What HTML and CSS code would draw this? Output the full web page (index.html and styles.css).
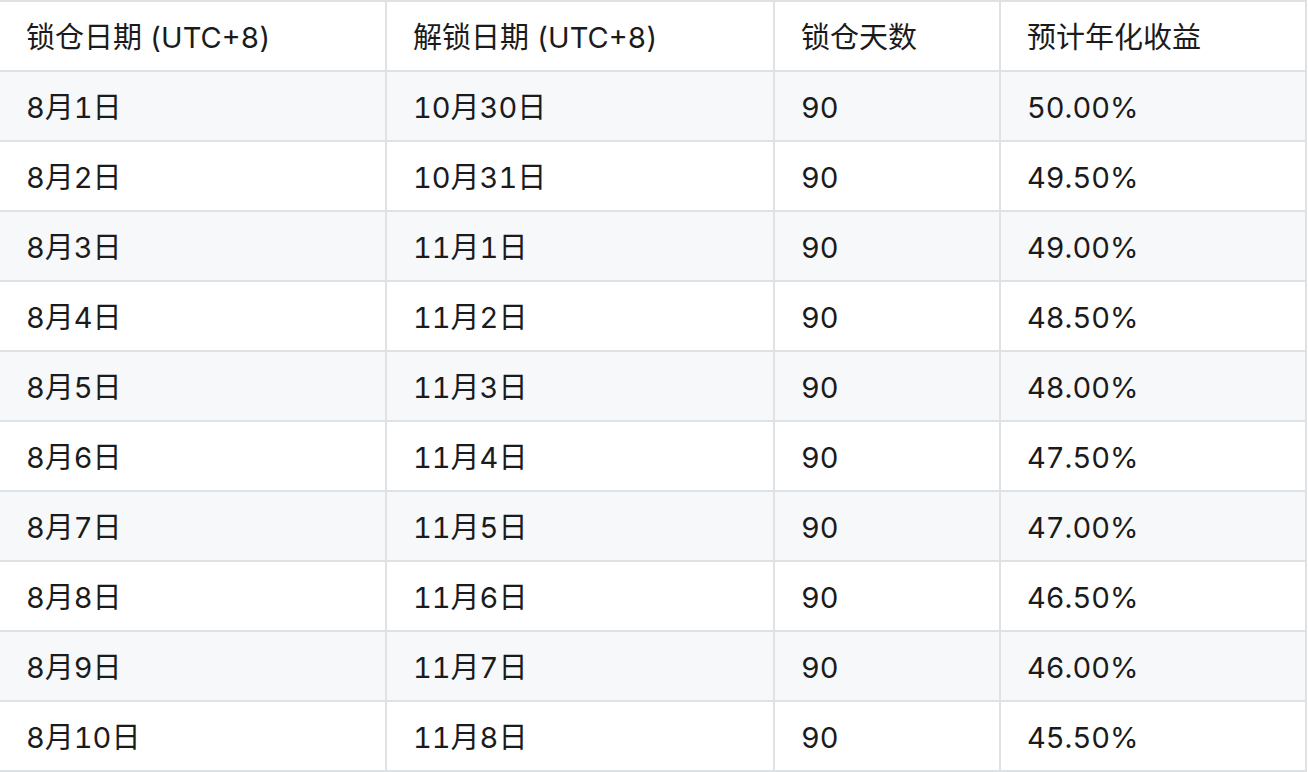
FILE: index.html
```html
<!DOCTYPE html>
<html lang="zh-CN">
<head>
<meta charset="utf-8">
<title>锁仓收益表</title>
<link rel="stylesheet" href="styles.css">
</head>
<body>
<table class="rates">
  <colgroup>
    <col class="c1"><col class="c2"><col class="c3"><col class="c4">
  </colgroup>
  <thead>
    <tr><th>锁仓日期 (UTC+8)</th><th>解锁日期 (UTC+8)</th><th>锁仓天数</th><th>预计年化收益</th></tr>
  </thead>
  <tbody>
    <tr><td>8月1日</td><td>10月30日</td><td>90</td><td>50.00%</td></tr>
    <tr><td>8月2日</td><td>10月31日</td><td>90</td><td>49.50%</td></tr>
    <tr><td>8月3日</td><td>11月1日</td><td>90</td><td>49.00%</td></tr>
    <tr><td>8月4日</td><td>11月2日</td><td>90</td><td>48.50%</td></tr>
    <tr><td>8月5日</td><td>11月3日</td><td>90</td><td>48.00%</td></tr>
    <tr><td>8月6日</td><td>11月4日</td><td>90</td><td>47.50%</td></tr>
    <tr><td>8月7日</td><td>11月5日</td><td>90</td><td>47.00%</td></tr>
    <tr><td>8月8日</td><td>11月6日</td><td>90</td><td>46.50%</td></tr>
    <tr><td>8月9日</td><td>11月7日</td><td>90</td><td>46.00%</td></tr>
    <tr><td>8月10日</td><td>11月8日</td><td>90</td><td>45.50%</td></tr>
  </tbody>
</table>
</body>
</html>
```

FILE: styles.css
```css
html, body {
  margin: 0;
  padding: 0;
  background: #ffffff;
}

body {
  overflow: hidden;
}

.rates {
  margin-left: -2px;
  width: 1309px;
  table-layout: fixed;
  border-collapse: separate;
  border-spacing: 2px;
  background: #dfe2e5;
  font-family: "Inter", "Noto Sans CJK SC", sans-serif;
  font-size: 29px;
  font-feature-settings: "tnum" 1;
  color: #1b1b1b;
}

.c1 { width: 385px; }
.c2 { width: 386px; }
.c3 { width: 224px; }
.c4 { width: 304px; }

.rates th,
.rates td {
  height: 68px;
  box-sizing: border-box;
  padding: 3px 26px 0;
  line-height: 44px;
  text-align: left;
  font-weight: 400;
  background: #ffffff;
  white-space: nowrap;
}

.rates tbody tr:nth-child(odd) td {
  background: #f6f8fa;
}
```
